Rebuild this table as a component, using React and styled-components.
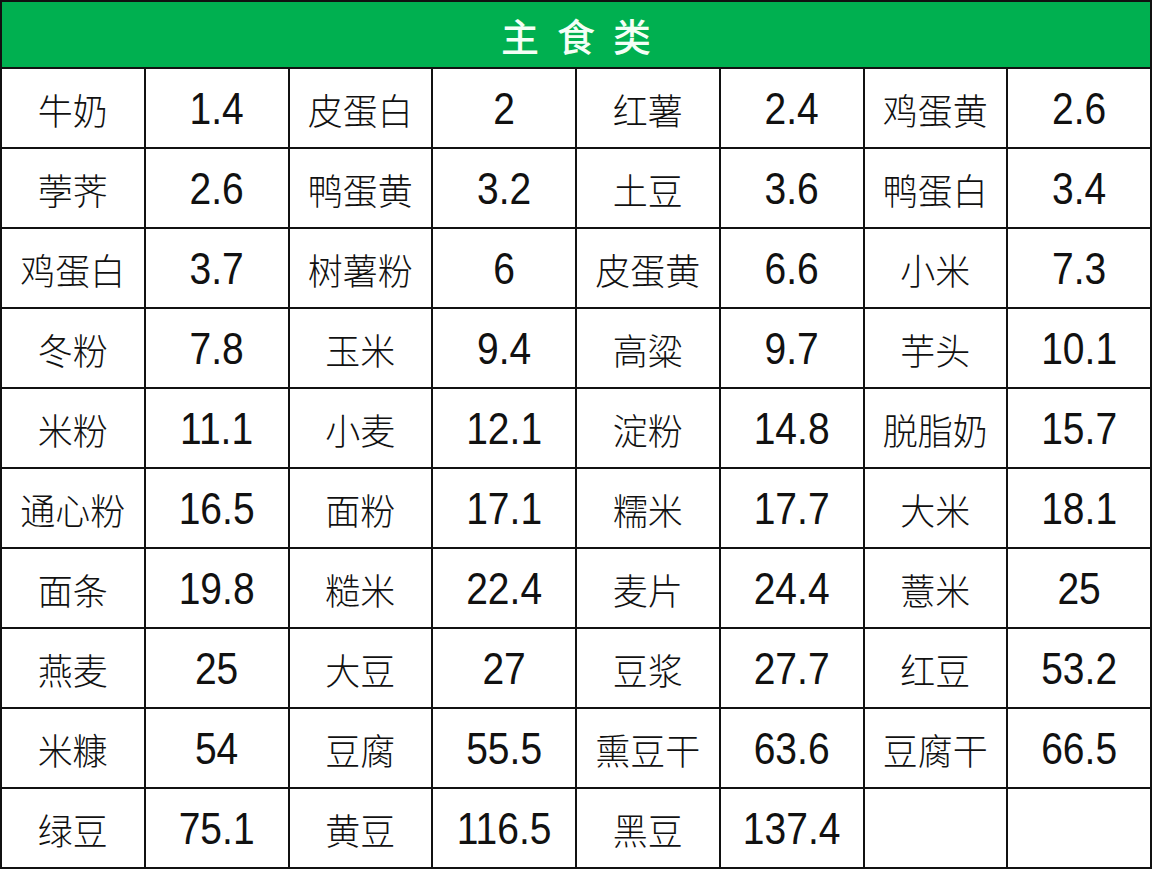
import React from "react";
import styled, { createGlobalStyle } from "styled-components";

const GlobalStyle = createGlobalStyle`
  html, body {
    margin: 0;
    padding: 0;
    background: #ffffff;
  }
`;

const Sheet = styled.div`
  width: 1152px;
  display: grid;
  grid-template-columns: repeat(8, 1fr);
  grid-template-rows: 65px repeat(10, 78px);
  gap: 2px;
  padding: 2px;
  box-sizing: border-box;
  background: #111;
`;

const Header = styled.div`
  grid-column: 1 / -1;
  background: #00b050;
  color: #f4fff6;
  display: flex;
  align-items: center;
  justify-content: center;
  font-family: "Noto Sans CJK SC", "Noto Sans", sans-serif;
  font-size: 38px;
  font-weight: 500;
  letter-spacing: 18px;
  padding-left: 18px;
`;

const Cell = styled.div`
  background: #fff;
  display: flex;
  align-items: center;
  justify-content: center;
  color: #111;
  white-space: nowrap;
  font-family: ${(p) =>
    p.$num
      ? `"Liberation Sans", Arial, sans-serif`
      : `"Noto Sans CJK SC", "Noto Sans", sans-serif`};
  font-size: ${(p) => (p.$num ? "39px" : "35px")};
  font-weight: ${(p) => (p.$num ? 400 : 300)};
`;

const Text = styled.span`
  display: inline-block;
  transform: ${(p) => (p.$num ? "scaleY(1.12)" : "scaleY(1.04)")};
  margin-top: ${(p) => (p.$num ? "2px" : "0")};
`;

const rows = [
  ["牛奶", "1.4", "皮蛋白", "2", "红薯", "2.4", "鸡蛋黄", "2.6"],
  ["荸荠", "2.6", "鸭蛋黄", "3.2", "土豆", "3.6", "鸭蛋白", "3.4"],
  ["鸡蛋白", "3.7", "树薯粉", "6", "皮蛋黄", "6.6", "小米", "7.3"],
  ["冬粉", "7.8", "玉米", "9.4", "高粱", "9.7", "芋头", "10.1"],
  ["米粉", "11.1", "小麦", "12.1", "淀粉", "14.8", "脱脂奶", "15.7"],
  ["通心粉", "16.5", "面粉", "17.1", "糯米", "17.7", "大米", "18.1"],
  ["面条", "19.8", "糙米", "22.4", "麦片", "24.4", "薏米", "25"],
  ["燕麦", "25", "大豆", "27", "豆浆", "27.7", "红豆", "53.2"],
  ["米糠", "54", "豆腐", "55.5", "熏豆干", "63.6", "豆腐干", "66.5"],
  ["绿豆", "75.1", "黄豆", "116.5", "黑豆", "137.4", "", ""],
];

export default function App() {
  return (
    <>
      <GlobalStyle />
      <Sheet>
        <Header>主食类</Header>
        {rows.map((row, r) =>
          row.map((v, c) => (
            <Cell key={`${r}-${c}`} $num={c % 2 === 1}>
              <Text $num={c % 2 === 1}>{v}</Text>
            </Cell>
          ))
        )}
      </Sheet>
    </>
  );
}
